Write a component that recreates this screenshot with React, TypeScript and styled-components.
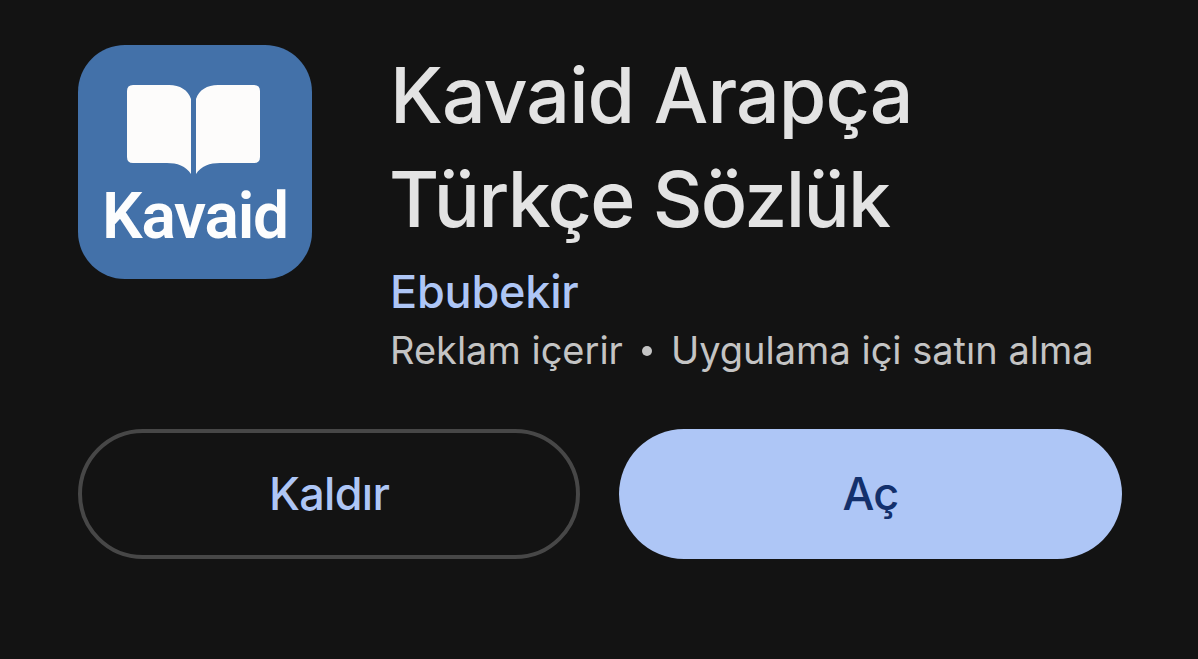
import React from 'react';
import styled, { createGlobalStyle } from 'styled-components';

const colors = {
  background: '#131313',
  text: '#e3e3e3',
  textSub: '#c4c4c4',
  primary: '#aec6f6',
  onPrimary: '#13306c',
  outline: '#474747',
  logo: '#4371a9',
};

const App: React.FC = () => {
  return (
    <StyledPage>
      <GlobalStyle />
      <StyledHeader>
        <StyledLogo>
          <BookIcon />
          <StyledLogoText>Kavaid</StyledLogoText>
        </StyledLogo>
        <StyledInfo>
          <StyledTitle>
            <StyledTitleLine spacing="-0.95px">Kavaid Arapça</StyledTitleLine>
            <StyledTitleLine spacing="-1.65px" indent="-1px">
              Türkçe Sözlük
            </StyledTitleLine>
          </StyledTitle>
          <StyledDeveloper>Ebubekir</StyledDeveloper>
          <StyledMeta>
            <span>Reklam içerir</span>
            <StyledDot />
            <span>Uygulama içi satın alma</span>
          </StyledMeta>
        </StyledInfo>
      </StyledHeader>
      <StyledActions>
        <StyledButton>Kaldır</StyledButton>
        <StyledButton filled>Aç</StyledButton>
      </StyledActions>
    </StyledPage>
  );
};
export default App;

const BookIcon: React.FC = () => (
  <StyledBook viewBox="0 0 134 90">
    <path d="M6 0H42C53 0 61 5 64 14V89C59 81 50 78 40 78H6Q0 78 0 72V6Q0 0 6 0Z" />
    <path d="M127 0H91C80 0 72 5 69 14V89C74 81 83 78 93 78H127Q133 78 133 72V6Q133 0 127 0Z" />
  </StyledBook>
);

const GlobalStyle = createGlobalStyle`
  body {
    margin: 0;
    background: ${colors.background};
  }
`;

const StyledPage = styled.div`
  box-sizing: border-box;
  width: 1198px;
  height: 659px;
  padding: 45px 76px 0 78px;
  overflow: hidden;
  background: ${colors.background};
  font-family: Inter, 'Liberation Sans', sans-serif;
`;

const StyledHeader = styled.div`
  display: flex;
  gap: 78px;
  height: 384px;
`;

const StyledLogo = styled.div`
  box-sizing: border-box;
  display: flex;
  flex-direction: column;
  align-items: center;
  flex: none;
  width: 234px;
  height: 234px;
  padding-top: 40px;
  border-radius: 47px;
  background: ${colors.logo};
`;

const StyledBook = styled.svg`
  width: 134px;
  height: 90px;
  margin-right: 2px;
  fill: #fdfcfb;
`;

const StyledLogoText = styled.div`
  margin-top: 9px;
  font-family: Roboto, 'Liberation Sans', sans-serif;
  font-size: 64px;
  font-weight: 600;
  line-height: 66px;
  letter-spacing: -1.2px;
  color: #fdfdfd;
`;

const StyledInfo = styled.div`
  white-space: nowrap;
`;

const StyledTitle = styled.h1`
  margin: -2px 0 0;
  font-size: 77px;
  font-weight: 500;
  line-height: 104px;
  color: ${colors.text};
`;

const StyledTitleLine = styled.span<{ spacing: string; indent?: string }>`
  display: block;
  margin-left: ${(props) => props.indent || 0};
  letter-spacing: ${(props) => props.spacing};
`;

const StyledDeveloper = styled.div`
  margin-top: 11px;
  font-size: 45px;
  font-weight: 500;
  line-height: 60px;
  letter-spacing: -0.2px;
  color: ${colors.primary};
`;

const StyledMeta = styled.div`
  display: flex;
  align-items: center;
  margin-top: 2px;
  font-size: 38px;
  line-height: 52px;
  color: ${colors.textSub};
`;

const StyledDot = styled.i`
  width: 10px;
  height: 10px;
  margin: 2px 19px 0;
  border-radius: 50%;
  background: currentColor;
`;

const StyledActions = styled.div`
  display: grid;
  grid-template-columns: 502px 503px;
  gap: 39px;
`;

const StyledButton = styled.button<{ filled?: boolean }>`
  height: 130px;
  padding: 0 0 2px;
  border: ${(props) => (props.filled ? 'none' : `4px solid ${colors.outline}`)};
  border-radius: 65px;
  background: ${(props) => (props.filled ? colors.primary : 'transparent')};
  color: ${(props) => (props.filled ? colors.onPrimary : colors.primary)};
  font-family: inherit;
  font-size: 45px;
  font-weight: 500;
  letter-spacing: -0.7px;
`;
